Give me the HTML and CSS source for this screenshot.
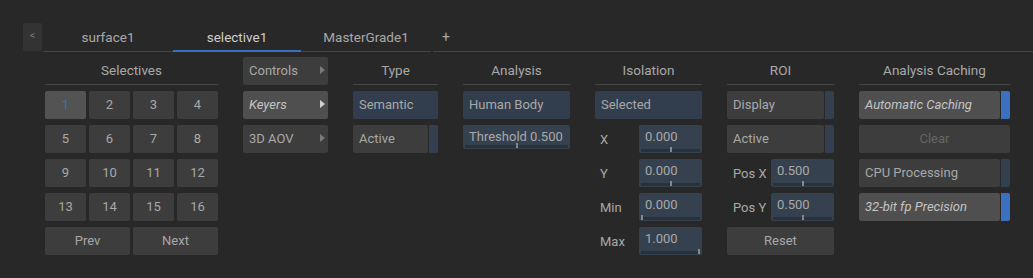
FILE: index.html
```html
<!DOCTYPE html>
<html lang="en">
<head>
    <meta charset="UTF-8">
    <meta name="viewport" content="width=device-width, initial-scale=1.0">
    <title>Selective</title>
    <link rel="stylesheet" href="styles.css">
</head>
<body>

    <div class="tabbar">
        <div class="back">&lt;</div>
        <div class="tabs">
            <div class="tab">surface1</div>
            <div class="tab active">selective1</div>
            <div class="tab">MasterGrade1</div>
            <div class="tab add">+</div>
            <div class="tab-fill"></div>
        </div>
    </div>

    <div class="panel">
        <!-- Selectives -->
        <div class="col col-sel">
            <div class="head">Selectives</div>
            <div class="sel-grid">
                <div class="btn current">1</div>
                <div class="btn center">2</div>
                <div class="btn center">3</div>
                <div class="btn center">4</div>
                <div class="btn center">5</div>
                <div class="btn center">6</div>
                <div class="btn center">7</div>
                <div class="btn center">8</div>
                <div class="btn center">9</div>
                <div class="btn center">10</div>
                <div class="btn center">11</div>
                <div class="btn center">12</div>
                <div class="btn center">13</div>
                <div class="btn center">14</div>
                <div class="btn center">15</div>
                <div class="btn center">16</div>
                <div class="btn center wide">Prev</div>
                <div class="btn center wide">Next</div>
            </div>
        </div>

        <!-- menus -->
        <div class="col col-sm">
            <div class="btn menu">Controls <span class="arrow"></span></div>
            <div class="btn menu light"><i>Keyers</i> <span class="arrow"></span></div>
            <div class="btn menu">3D AOV <span class="arrow"></span></div>
        </div>

        <!-- Type -->
        <div class="col col-sm">
            <div class="head">Type</div>
            <div class="btn blue">Semantic</div>
            <div class="toggle">
                <div class="btn">Active</div>
                <div class="strip"></div>
            </div>
        </div>

        <!-- Analysis -->
        <div class="col col-md">
            <div class="head">Analysis</div>
            <div class="btn blue">Human Body</div>
            <div class="field">Threshold 0.500<span class="tick" style="left: 50%"></span></div>
        </div>

        <!-- Isolation -->
        <div class="col col-md">
            <div class="head">Isolation</div>
            <div class="btn blue">Selected</div>
            <div class="row"><span class="label">X</span><div class="field">0.000<span class="tick" style="left: 50%"></span></div></div>
            <div class="row"><span class="label">Y</span><div class="field">0.000<span class="tick" style="left: 50%"></span></div></div>
            <div class="row"><span class="label">Min</span><div class="field">0.000<span class="tick" style="left: 0%"></span></div></div>
            <div class="row"><span class="label">Max</span><div class="field">1.000<span class="tick" style="left: 100%"></span></div></div>
        </div>

        <!-- ROI -->
        <div class="col col-md">
            <div class="head">ROI</div>
            <div class="toggle">
                <div class="btn">Display</div>
                <div class="strip"></div>
            </div>
            <div class="toggle">
                <div class="btn">Active</div>
                <div class="strip"></div>
            </div>
            <div class="row"><span class="label roi">Pos X</span><div class="field">0.500<span class="tick" style="left: 50%"></span></div></div>
            <div class="row"><span class="label roi">Pos Y</span><div class="field">0.500<span class="tick" style="left: 50%"></span></div></div>
            <div class="btn center">Reset</div>
        </div>

        <!-- Analysis Caching -->
        <div class="col col-lg">
            <div class="head">Analysis Caching</div>
            <div class="toggle">
                <div class="btn light"><i>Automatic Caching</i></div>
                <div class="strip on"></div>
            </div>
            <div class="btn center disabled">Clear</div>
            <div class="toggle">
                <div class="btn">CPU Processing</div>
                <div class="strip"></div>
            </div>
            <div class="toggle">
                <div class="btn light"><i>32-bit fp Precision</i></div>
                <div class="strip on"></div>
            </div>
        </div>
    </div>

</body>
</html>
```

FILE: styles.css
```css
body {
    margin: 0;
    background-color: #282828;
    font-family: Roboto, "Noto Sans", sans-serif;
    font-size: 13px;
    color: #a8a8a8;
}
.tabbar {
    display: flex;
    padding: 23px 0 0 23px;
}
.back {
    width: 19px;
    height: 28px;
    line-height: 26px;
    background: #333333;
    border-radius: 2px;
    color: #6f6f6f;
    font-size: 11px;
    text-align: center;
    margin-right: 1px;
}
.tabs {
    display: flex;
    flex: 1;
    height: 29px;
}
.tab, .tab-fill {
    box-sizing: border-box;
    border-bottom: 1px solid #444444;
    line-height: 28px;
    text-align: center;
}
.tab {
    width: 130px;
    font-size: 13.5px;
}
.tab.active {
    width: 128px;
    color: #cfcfcf;
    border-bottom: 2px solid #3b6fbd;
}
.tab.add {
    width: 26px;
    margin-left: 2px;
    font-size: 14px;
}
.tab-fill {
    flex: 1;
}
.panel {
    display: flex;
    align-items: flex-start;
    gap: 25px;
    padding: 5px 0 0 45px;
}
.col {
    display: flex;
    flex-direction: column;
    gap: 6px;
}
.col-sel { width: 173px; }
.col-sm { width: 85px; }
.col-md { width: 107px; }
.col-lg { width: 151px; }
.head {
    height: 27px;
    line-height: 27px;
    border-bottom: 1px solid #464646;
    text-align: center;
    font-size: 13.5px;
}
.sel-grid {
    display: grid;
    grid-template-columns: repeat(4, 41px);
    gap: 6px 3px;
}
.btn {
    box-sizing: border-box;
    height: 28px;
    line-height: 28px;
    padding: 0 6px;
    background: #3d3d3d;
    border-radius: 2px;
    white-space: nowrap;
    overflow: hidden;
}
.btn.center {
    text-align: center;
    padding: 0;
}
.btn.wide {
    grid-column: span 2;
}
.btn.current {
    background: #535353;
    color: #3b6fc2;
    text-align: center;
    padding: 0;
}
.btn.light {
    background: #4f4f4f;
    color: #c4c4c4;
}
.btn.blue {
    background: #323e4d;
}
.btn.disabled {
    color: #666666;
}
.btn.menu {
    display: flex;
    justify-content: space-between;
    align-items: center;
    padding-right: 3px;
}
.arrow {
    width: 0;
    height: 0;
    border-left: 5px solid #7a7a7a;
    border-top: 4px solid transparent;
    border-bottom: 4px solid transparent;
    margin-top: -2px;
}
.light .arrow {
    border-left-color: #d0d0d0;
}
.toggle {
    display: flex;
    gap: 1px;
}
.toggle .btn {
    flex: 1;
}
.strip {
    width: 9px;
    height: 28px;
    background: #33404f;
    border-radius: 0 2px 2px 0;
}
.strip.on {
    background: #3b71c0;
}
.row {
    display: flex;
    align-items: center;
}
.label {
    width: 44px;
    padding-left: 5px;
    box-sizing: border-box;
}
.label.roi {
    padding-left: 6px;
}
.field {
    position: relative;
    flex: 1;
    box-sizing: border-box;
    height: 28px;
    line-height: 24px;
    padding: 0 6px;
    background: #36414f;
    border-radius: 2px;
    white-space: nowrap;
}
.field::before {
    content: "";
    position: absolute;
    left: 2px;
    right: 2px;
    bottom: 1px;
    height: 3px;
    background: #29313b;
}
.tick {
    position: absolute;
    bottom: 1px;
    width: 2px;
    height: 5px;
    margin-left: -1px;
    background: #888888;
}
.tick[style*="left: 0%"] {
    margin-left: 2px;
}
.tick[style*="left: 100%"] {
    margin-left: -4px;
}
```
